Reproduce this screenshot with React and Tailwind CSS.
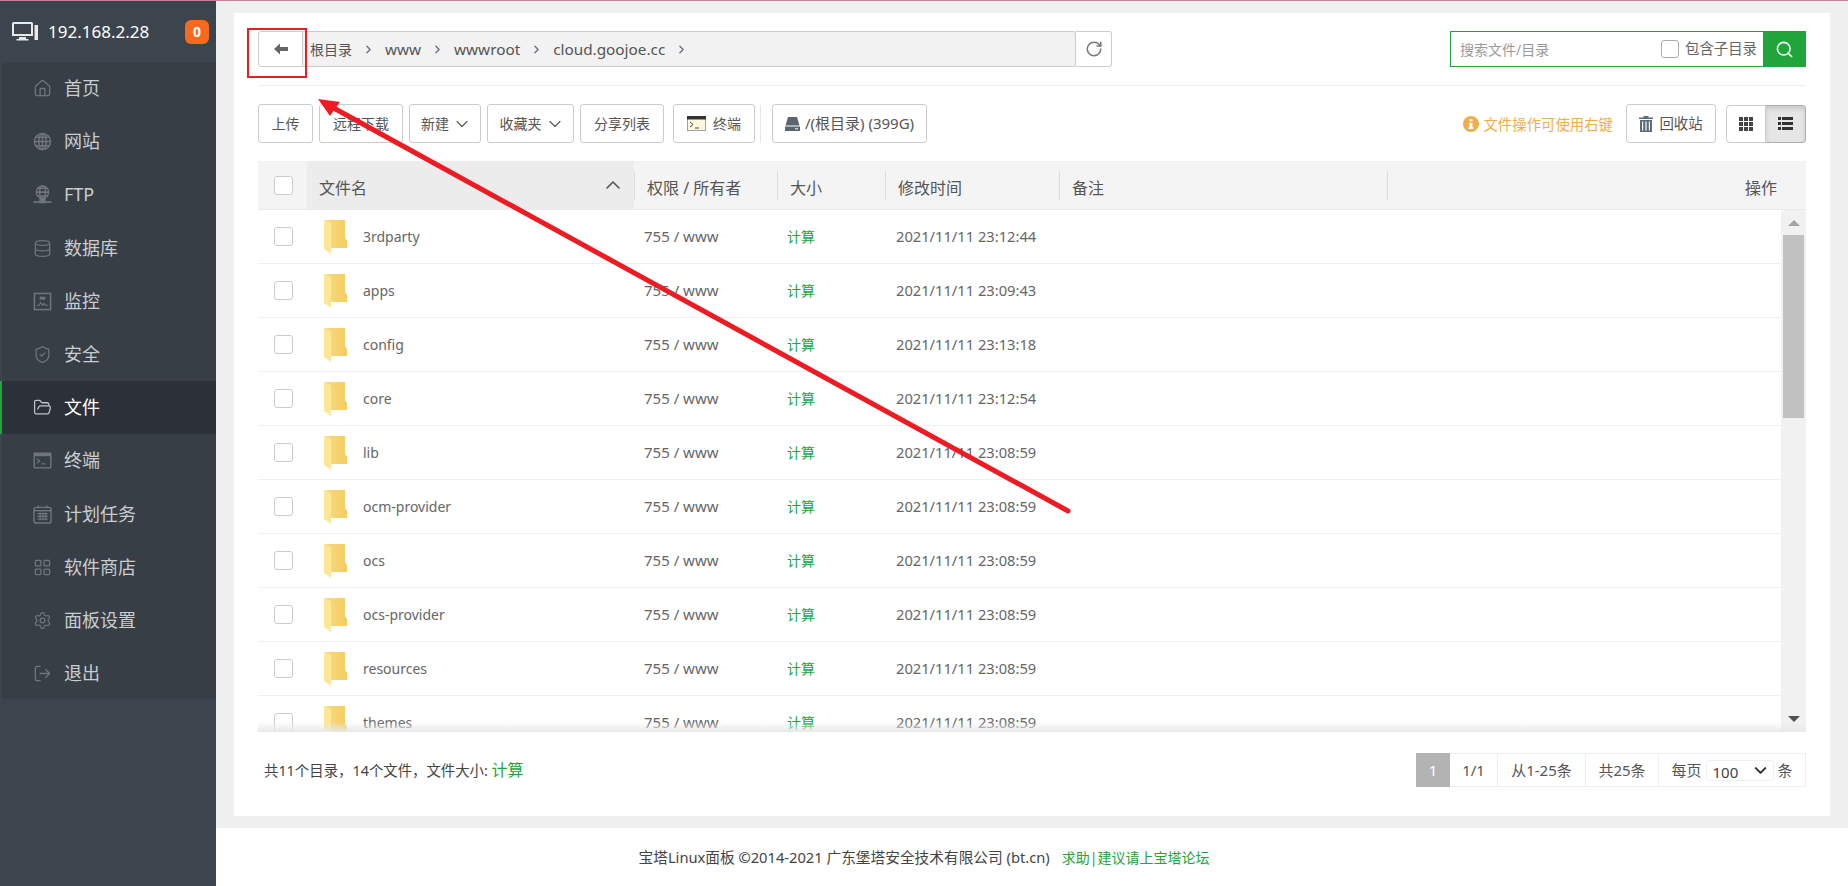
import React from 'react';
import {
  Home, Database, ShieldCheck, FolderOpen, LayoutGrid, Settings, LogOut,
  ChevronRight, ChevronDown, ChevronUp, RotateCw, Search,
} from 'lucide-react';

const FONT = "font-['Noto_Sans','Noto_Sans_CJK_SC',sans-serif]";

const GlobeIcon = (props) => (
  <svg viewBox="0 0 20 20" fill="none" stroke="currentColor" strokeWidth="1.2" {...props}>
    <circle cx="10" cy="10" r="8.500" strokeWidth="1.500" />
    <ellipse cx="10" cy="10" rx="4" ry="8.500" />
    <path d="M10 1.500v17M1.500 10h17M3 5.500h14M3 14.500h14" />
  </svg>
);

const FtpIcon = (props) => (
  <svg viewBox="0 0 20 20" fill="none" stroke="currentColor" strokeWidth="1.2" {...props}>
    <circle cx="10" cy="7.500" r="6.500" strokeWidth="1.400" />
    <ellipse cx="10" cy="7.500" rx="3" ry="6.500" />
    <path d="M3.500 7.500h13M5 3.500h10M5 11.500h10" />
    <path d="M0.500 18h19" strokeWidth="1.800" />
    <rect x="7.500" y="14.500" width="5" height="4" fill="currentColor" />
  </svg>
);

const MonitorChartIcon = (props) => (
  <svg viewBox="0 0 20 20" fill="none" stroke="currentColor" strokeWidth="1.500" {...props}>
    <rect x="1.500" y="1.500" width="17" height="17" />
    <path d="M4 14h2.500l1.500-3 2 3 1.500-2 1.500 2H16" strokeWidth="1.100" />
    <path d="M7 5h6v3H7z" fill="currentColor" stroke="none" />
  </svg>
);

const ConsoleIcon = (props) => (
  <svg viewBox="0 0 20 18" fill="none" {...props}>
    <rect x="0.500" y="0.500" width="19" height="17" rx="1.500" fill="currentColor" />
    <rect x="2" y="4.500" width="16" height="11.500" fill="#373e46" />
    <path d="M4 7l3 2.500L4 12" stroke="currentColor" strokeWidth="1.300" />
    <path d="M9 12.500h4" stroke="currentColor" strokeWidth="1.300" />
  </svg>
);

const CalendarGridIcon = (props) => (
  <svg viewBox="0 0 20 20" fill="none" stroke="currentColor" {...props}>
    <rect x="1" y="2.500" width="18" height="16.500" rx="2.500" strokeWidth="1.500" />
    <path d="M1 6h18" strokeWidth="1.500" />
    <path d="M5.500 0.500v3M14.500 0.500v3" strokeWidth="1.500" />
    <path d="M4.500 9h11M4.500 12h11M4.500 15h11M7.500 8v8M10.500 8v8M13.500 8v8" strokeWidth="1.300" />
  </svg>
);

const menu = [
  { label: '首页', Icon: Home },
  { label: '网站', Icon: GlobeIcon },
  { label: 'FTP', Icon: FtpIcon },
  { label: '数据库', Icon: Database },
  { label: '监控', Icon: MonitorChartIcon },
  { label: '安全', Icon: ShieldCheck },
  { label: '文件', Icon: FolderOpen, active: true },
  { label: '终端', Icon: ConsoleIcon },
  { label: '计划任务', Icon: CalendarGridIcon },
  { label: '软件商店', Icon: LayoutGrid },
  { label: '面板设置', Icon: Settings },
  { label: '退出', Icon: LogOut },
];

const files = [
  ['3rdparty', '2021/11/11 23:12:44'],
  ['apps', '2021/11/11 23:09:43'],
  ['config', '2021/11/11 23:13:18'],
  ['core', '2021/11/11 23:12:54'],
  ['lib', '2021/11/11 23:08:59'],
  ['ocm-provider', '2021/11/11 23:08:59'],
  ['ocs', '2021/11/11 23:08:59'],
  ['ocs-provider', '2021/11/11 23:08:59'],
  ['resources', '2021/11/11 23:08:59'],
  ['themes', '2021/11/11 23:08:59'],
];

const Checkbox = () => (
  <input
    type="checkbox"
    className="appearance-none block w-[19px] h-[19px] bg-white border border-[#ccc] rounded-[3px]"
  />
);

const FolderIcon = () => (
  <svg viewBox="0 0 23 34" className="w-[23px] h-[34px]">
    <defs>
      <linearGradient id="folderBack" x1="0" y1="0" x2="1" y2="0">
        <stop offset="0" stopColor="#f8dc85" />
        <stop offset="1" stopColor="#f4cc60" />
      </linearGradient>
    </defs>
    <path d="M0 0h21v18l2 3v7H7V4z" fill="url(#folderBack)" />
    <path d="M0 0l7 4v30l-7-5z" fill="#ffe596" />
  </svg>
);

const ToolButton = ({ className, children }) => (
  <button className={`h-[39px] flex items-center justify-center gap-1 border border-[#ccc] rounded-[3px] bg-white text-[14px] text-[#555] ${className}`}>
    {children}
  </button>
);

const Sidebar = () => (
  <aside className="w-[216px] shrink-0 h-full bg-[#3c444d]">
    <div className="h-[61px] flex items-center pl-[12px] pr-[7px]">
      <svg viewBox="0 0 26 19" className="w-[26px] h-[19px] text-[#e8e8e8]" fill="currentColor">
        <path d="M0 1.500A1.500 1.500 0 0 1 1.500 0h18A1.500 1.500 0 0 1 21 1.500V14H0zM2 2v10h17V2z" fillRule="evenodd" />
        <path d="M7 15h7v2h2.500v1.500h-12V17H7z" />
        <path d="M22.500 3h3.500v15h-3.500z" />
      </svg>
      <span className="ml-[10px] text-[17px] text-white flex-1">192.168.2.28</span>
      <span className="w-[24px] h-[24px] rounded-[6px] bg-[#f7691f] text-white text-[14px] font-bold flex items-center justify-center">0</span>
    </div>
    <nav className="h-[637px] bg-[#373e46] border-l-2 border-[#3c444d]">
      {menu.map(({ label, Icon, active }) => (
        <div
          key={label}
          className={`relative h-[53.2px] flex items-center pl-[31px] text-[18px] ${active ? 'bg-[#2c3038] text-white' : 'text-[#c9cdd0]'}`}
        >
          {active && <span className="absolute left-[-2px] top-0 bottom-0 w-[2px] bg-[#20a53a]" />}
          <Icon className={`w-[19px] h-[19px] ${active ? 'text-[#c0c3c6]' : 'text-[#6f757b]'}`} strokeWidth={1.6} />
          <span className="ml-[12px]">{label}</span>
        </div>
      ))}
    </nav>
  </aside>
);

const PathBar = () => (
  <div className="flex items-center justify-between h-[36px]">
    <div className="flex">
      <button className="w-[45px] h-[36px] flex items-center justify-center bg-white border border-[#ccc] rounded-l-[3px]">
        <svg viewBox="0 0 14 12" className="w-[14px] h-[12px] text-[#666]" fill="currentColor">
          <path d="M0 6l6-5.500V4h8v4H6v3.500z" />
        </svg>
      </button>
      <div className="w-[773px] h-[36px] flex items-center pl-[7px] bg-[#f2f2f2] border border-l-0 border-[#ccc] rounded-r-[3px] text-[15.3px] text-[#555]">
        <span className="text-[14px]">根目录</span>
        {['www', 'wwwroot', 'cloud.goojoe.cc', ''].map((p) => (
          <React.Fragment key={p}>
            <ChevronRight className="w-[13px] h-[13px] mx-[10px] text-[#5f6f7f]" strokeWidth={2.4} />
            <span>{p}</span>
          </React.Fragment>
        ))}
      </div>
      <button className="w-[36px] h-[36px] flex items-center justify-center bg-white border border-l-0 border-[#ccc] rounded-r-[3px]">
        <RotateCw className="w-[18px] h-[18px] text-[#777]" strokeWidth={2} />
      </button>
    </div>
    <div className="w-[356px] h-[36px] flex items-center border border-[#20a53a]">
      <input
        placeholder="搜索文件/目录"
        className="flex-1 min-w-0 h-full pl-[9px] outline-none text-[14px] text-[#555] placeholder:text-[#999]"
      />
      <label className="flex items-center gap-[6px] text-[14.4px] text-[#666] pr-[6px]">
        <input type="checkbox" className="appearance-none block w-[18px] h-[18px] bg-white border border-[#aaa] rounded-[3px]" />
        包含子目录
      </label>
      <button className="w-[43px] h-[36px] -my-px -mr-px bg-[#20a53a] flex items-center justify-center">
        <Search className="w-[19px] h-[19px] text-white" strokeWidth={2} />
      </button>
    </div>
  </div>
);

const Toolbar = () => (
  <div className="flex items-center mt-[18px] mb-[18px]">
    <div className="flex gap-[6px]">
      <ToolButton className="w-[55px]">上传</ToolButton>
      <ToolButton className="w-[84px]">远程下载</ToolButton>
      <ToolButton className="w-[72px] gap-0">新建<ChevronDown className="w-[20px] h-[20px] -ml-px -mr-[3px]" strokeWidth={1.3} /></ToolButton>
      <ToolButton className="w-[87px] gap-0">收藏夹<ChevronDown className="w-[20px] h-[20px] -ml-px -mr-[3px]" strokeWidth={1.3} /></ToolButton>
      <ToolButton className="w-[84px]">分享列表</ToolButton>
    </div>
    <ToolButton className="w-[82px] ml-[9px] gap-[7px]">
      <svg viewBox="0 0 19 15" className="w-[19px] h-[15px]">
        <rect x="0.500" y="0.500" width="18" height="14" fill="#fff8e0" stroke="#9aa3ad" />
        <rect x="0" y="0" width="19" height="3.500" fill="#333" />
        <path d="M3 6l3 2.500L3 11M8 12h4" fill="none" stroke="#445" strokeWidth="1" />
      </svg>
      终端
    </ToolButton>
    <span className="w-px h-[38px] bg-[#e8e8e8] mx-[5px]" />
    <ToolButton className="w-[155px] ml-[6px] gap-[5px]">
      <svg viewBox="0 0 15 14" className="w-[15px] h-[14px]" fill="#5a6570">
        <path d="M3 0h9l2.500 8.500H.5z" />
        <path d="M0 9.500h15V14H0z" />
        <path d="M10 11.300h3v1h-3z" fill="#fff" />
      </svg>
      <span className="text-[15px]">/(根目录) (399G)</span>
    </ToolButton>
    <div className="ml-auto flex items-center">
      <svg viewBox="0 0 16 16" className="w-[16px] h-[16px]">
        <circle cx="8" cy="8" r="8" fill="#f0ad4e" />
        <path d="M6.500 3h3v2.500h-3zM6 7h3.500v4.500H10.500V13h-5v-1.500h1V8.500H6z" fill="#fff" />
      </svg>
      <span className="ml-[4px] mt-[2px] text-[14.4px] text-[#f0ad4e]">文件操作可使用右键</span>
      <ToolButton className="w-[90px] ml-[13px] gap-[6px]">
        <svg viewBox="0 0 14 16" className="w-[14px] h-[16px]" fill="#5b6b77">
          <path d="M4.500 0h5v1.500H14V3H0V1.500h4.500z" />
          <path d="M1 4h12v12H1zM3 5.500v9h1.200v-9zM6.400 5.500v9h1.200v-9zM9.800 5.500v9H11v-9z" fillRule="evenodd" />
        </svg>
        <span className="text-[14.4px]">回收站</span>
      </ToolButton>
      <div className="flex ml-[10px] h-[38px]">
        <button className="w-[40px] flex items-center justify-center bg-white border border-[#ccc] rounded-l-[4px]">
          <svg viewBox="0 0 14 14" className="w-[14px] h-[14px]" fill="#444">
            <path d="M0 0h4v4H0zM5 0h4v4H5zM10 0h4v4h-4zM0 5h4v4H0zM5 5h4v4H5zM10 5h4v4h-4zM0 10h4v4H0zM5 10h4v4H5zM10 10h4v4h-4z" />
          </svg>
        </button>
        <button className="w-[40px] flex items-center justify-center bg-[#e6e6e6] border border-l-0 border-[#adadad] rounded-r-[4px] shadow-[inset_0_3px_5px_rgba(0,0,0,0.125)]">
          <svg viewBox="0 0 15 13" className="w-[15px] h-[13px]" fill="#333">
            <path d="M0 0h3v3H0zM4 0h11v3H4zM0 5h3v3H0zM4 5h11v3H4zM0 10h3v3H0zM4 10h11v3H4z" />
          </svg>
        </button>
      </div>
    </div>
  </div>
);

const TableHead = () => (
  <div className="grid grid-cols-[49px_327px_143px_108px_174px_328px_1fr] h-[49px] bg-[#f4f4f4] border-b border-[#eaeaea] text-[16px] text-[#555]">
    <div className="flex items-center justify-center pl-px"><Checkbox /></div>
    <div className="flex items-center justify-between pl-[12px] pr-[9px] bg-[#ececec]">
      <span className="pt-[5px]">文件名</span>
      <ChevronUp className="w-[24px] h-[24px] text-[#555]" strokeWidth={1.6} />
    </div>
    {['权限 / 所有者', '大小', '修改时间', '备注'].map((t) => (
      <div key={t} className="flex items-center pl-[13px] pt-[5px] relative before:absolute before:left-0 before:top-[10px] before:bottom-[9px] before:w-px before:bg-[#ddd]">
        {t}
      </div>
    ))}
    <div className="flex items-center justify-end pr-[29px] pt-[5px] relative before:absolute before:left-0 before:top-[10px] before:bottom-[9px] before:w-px before:bg-[#ddd]">
      操作
    </div>
  </div>
);

const FileList = () => (
  <div className="relative flex h-[522px] overflow-hidden">
    <div className="flex-1 min-w-0">
      {files.map(([name, time]) => (
        <div key={name} className="grid grid-cols-[49px_327px_143px_108px_1fr] h-[54px] border-b border-[#f0f0f0] text-[14px] text-[#666]">
          <div className="flex items-center justify-center pl-px"><Checkbox /></div>
          <div className="flex items-center pl-[17px]">
            <FolderIcon />
            <span className="ml-[16px]">{name}</span>
          </div>
          <div className="flex items-center pl-[10px] text-[15px]">755 / www</div>
          <div className="flex items-center pl-[10px] text-[#20a53a]">计算</div>
          <div className="flex items-center pl-[11px] text-[14.7px]">{time}</div>
        </div>
      ))}
    </div>
    <div className="w-[25px] shrink-0 bg-[#f1f1f1] flex flex-col items-center">
      <span className="mt-[10px] w-0 h-0 border-x-[6px] border-x-transparent border-b-[6px] border-b-[#a3a3a3]" />
      <span className="mt-[9px] w-[21px] h-[183px] bg-[#c1c1c1]" />
      <span className="mt-auto mb-[10px] w-0 h-0 border-x-[6px] border-x-transparent border-t-[6px] border-t-[#505050]" />
    </div>
    <div className="absolute left-0 right-0 bottom-0 h-[10px] bg-gradient-to-b from-transparent to-[#e8e8e8] pointer-events-none" />
  </div>
);

const Pager = () => (
  <div className="flex h-[34px] border border-[#eee] text-[15px] text-[#555]">
    <span className="w-[34px] -my-px -ml-px bg-[#b3b3b3] text-white flex items-center justify-center">1</span>
    <span className="w-[48px] flex items-center justify-center border-r border-[#eee]">1/1</span>
    <span className="w-[88px] flex items-center justify-center border-r border-[#eee]">从1-25条</span>
    <span className="w-[73px] flex items-center justify-center border-r border-[#eee]">共25条</span>
    <span className="w-[146px] flex items-center justify-center gap-[4px]">
      每页
      <span className="relative">
        <select defaultValue="100" className="block appearance-none w-[68px] h-[21px] pl-[6px] bg-white border border-[#eee] rounded-[3px] text-[15px] text-[#444] outline-none">
          <option value="100">100</option>
        </select>
        <ChevronDown className="absolute right-[4px] top-[1px] w-[19px] h-[19px] text-[#333] pointer-events-none" strokeWidth={2.6} />
      </span>
      条
    </span>
  </div>
);

const App = () => (
  <div className={`relative w-full h-[886px] overflow-hidden flex flex-col bg-white ${FONT}`}>
    <div className="h-px shrink-0 bg-[#c9809b]" />
    <div className="flex-1 min-h-0 flex">
      <Sidebar />
      <div className="flex-1 min-w-0 flex flex-col">
        <main className="h-[827px] shrink-0 bg-[#f0f0f0] pt-[12px] px-[18px] pb-[12px]">
          <div className="h-[803px] bg-white pt-[18px] px-[24px]">
            <PathBar />
            <div className="h-px bg-[#eee] mt-[18px]" />
            <Toolbar />
            <TableHead />
            <FileList />
            <div className="flex items-center justify-between mt-[21px]">
              <div className="pl-[6px] text-[14.4px] text-[#444]">
                共11个目录，14个文件，文件大小: <span className="text-[16px] text-[#20a53a]">计算</span>
              </div>
              <Pager />
            </div>
          </div>
        </main>
        <footer className="flex-1 flex items-center justify-center gap-[12px] pr-[216px] text-[14.7px] text-[#444]">
          <span>宝塔Linux面板 ©2014-2021 广东堡塔安全技术有限公司 (bt.cn)</span>
          <a className="text-[14px] text-[#20a53a]">求助|建议请上宝塔论坛</a>
        </footer>
      </div>
    </div>

    {/* annotation drawn over the screenshot */}
    <div className="absolute left-[247px] top-[28px] w-[60px] h-[50px] border-2 border-[#ed1c24] pointer-events-none" />
    <svg className="absolute left-0 top-0 w-[1848px] h-[886px] pointer-events-none" viewBox="0 0 1848 886">
      <path d="M1068 511L330 106" stroke="#ed1c24" strokeWidth="5" strokeLinecap="round" />
      <path d="M318 99l22 3-10 14z" fill="#ed1c24" />
    </svg>
  </div>
);

export default App;
